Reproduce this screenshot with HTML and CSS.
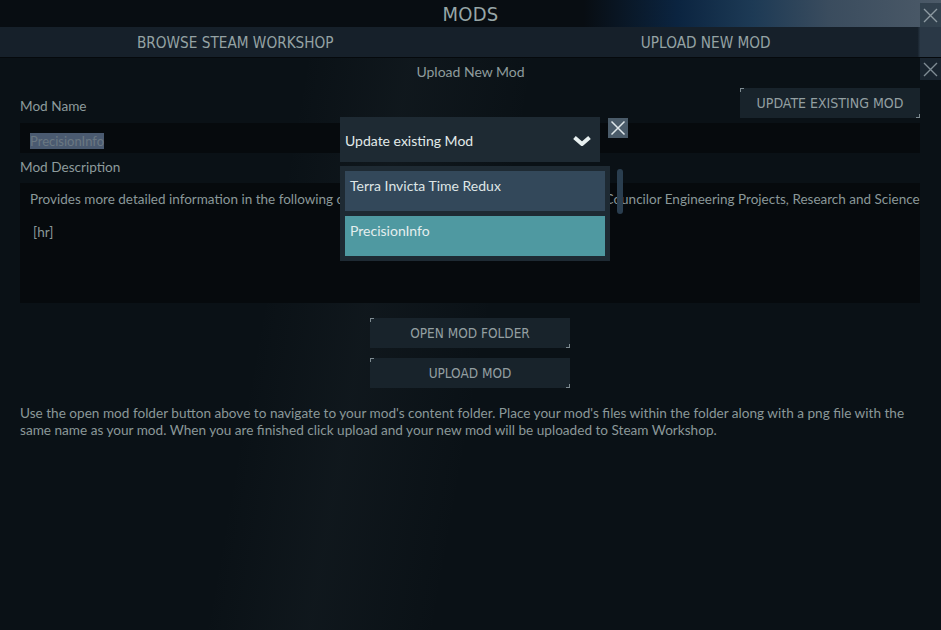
FILE: index.html
```html
<!DOCTYPE html>
<html lang="en">
  <head>
    <meta charset="UTF-8" />
    <title>Mods</title>
    <link rel="stylesheet" href="styles.css">
  </head>
  <body>
    <div class="screen">
      <header class="topbar">
        <span></span>
        <h1>MODS</h1>
        <button class="close-btn top-close" aria-label="Close">
          <svg width="15" height="15" viewBox="0 0 15 15"><path d="M1 1L14 14M14 1L1 14" stroke="#8d9aa2" stroke-width="1.4" fill="none"/></svg>
        </button>
      </header>

      <nav class="tabs">
        <div class="tab">BROWSE STEAM WORKSHOP</div>
        <div class="tab">UPLOAD NEW MOD</div>
      </nav>

      <main class="panel">
        <div class="panel-head">
          <span></span>
          <h2>Upload New Mod</h2>
          <button class="close-btn panel-close" aria-label="Close">
            <svg width="15" height="15" viewBox="0 0 15 15"><path d="M1 1L14 14M14 1L1 14" stroke="#7f8c94" stroke-width="1.4" fill="none"/></svg>
          </button>
        </div>

        <div class="form">
          <div class="name-row">
            <label class="field-label">Mod Name</label>
            <button class="game-btn update-btn">UPDATE EXISTING MOD</button>
          </div>
          <div class="input-box">
            <span class="selected">PrecisionInfo</span>
          </div>

          <label class="field-label desc-label">Mod Description</label>
          <div class="textarea-box">
            <div class="desc-line">Provides more detailed information in the following categories: Habitats, Space Combat, Nations, Councilor Engineering Projects, Research and Science</div>
            <div class="desc-line hr-line">[hr]</div>
          </div>

          <div class="actions">
            <button class="game-btn action-btn">OPEN MOD FOLDER</button>
            <button class="game-btn action-btn">UPLOAD MOD</button>
          </div>

          <p class="help">Use the open mod folder button above to navigate to your mod's content folder. Place your mod's files within the folder along with a png file with the same name as your mod. When you are finished click upload and your new mod will be uploaded to Steam Workshop.</p>

          <!-- dropdown popup over the form -->
          <div class="dropdown">
            <div class="dropdown-head">
              <span>Update existing Mod</span>
              <svg width="20" height="12" viewBox="0 0 20 12"><path d="M2.5 2.5L10 9L17.5 2.5" stroke="#e8f0f0" stroke-width="4" fill="none" stroke-linejoin="round"/></svg>
            </div>
            <div class="dropdown-list">
              <div class="option">Terra Invicta Time Redux</div>
              <div class="option active">PrecisionInfo</div>
              <div class="scroll-thumb"></div>
            </div>
          </div>
          <button class="clear-btn" aria-label="Cancel">
            <svg width="16" height="16" viewBox="0 0 16 16"><path d="M1.5 1.5L14.5 14.5M14.5 1.5L1.5 14.5" stroke="#dfe7ea" stroke-width="1.5" fill="none"/></svg>
          </button>
        </div>
      </main>
    </div>
  </body>
</html>
```

FILE: styles.css
```css
* {
  box-sizing: border-box;
  margin: 0;
  padding: 0;
}

body {
  width: 941px;
  height: 630px;
  overflow: hidden;
  background-color: #0a1116;
  font-family: Lato, "Noto Sans", sans-serif;
  color: #8d9c9d;
}

.screen {
  height: 630px;
  display: flex;
  flex-direction: column;
  background:
    linear-gradient(100deg, transparent 30%, rgba(120, 140, 150, 0.05) 40%, transparent 52%),
    #0a1116;
}

button {
  font-family: inherit;
  border: none;
  cursor: pointer;
}

/* top bar */
.topbar {
  height: 27px;
  display: grid;
  grid-template-columns: 1fr auto 1fr;
  align-items: center;
  background: linear-gradient(90deg, #080d12 0%, #080d12 62%, #0b2440 72%, #1d3a55 80%, #3a4c5e 88%, #4c5a68 100%);
}

.topbar h1 {
  font-family: "Liberation Sans Narrow", "DejaVu Sans Condensed", sans-serif;
  font-weight: normal;
  font-size: 20px;
  color: #97a6a7;
  letter-spacing: 0.3px;
  padding-top: 1px;
}

.close-btn {
  justify-self: end;
  width: 21px;
  display: flex;
  align-items: center;
  justify-content: center;
}

.top-close {
  height: 24px;
  margin-top: 3px;
  background-color: rgba(40, 55, 68, 0.7);
}

/* tabs */
.tabs {
  height: 30px;
  display: grid;
  grid-template-columns: 1fr 1fr;
  background: linear-gradient(90deg, #16202a 0%, #16202a 97.5%, #2a3846 97.8%);
}

.tab {
  display: flex;
  align-items: center;
  justify-content: center;
  font-family: "Liberation Sans Narrow", "DejaVu Sans Condensed", sans-serif;
  font-size: 15.2px;
  color: #95a3a4;
  padding-top: 1px;
}

/* panel */
.panel {
  flex: 1;
  border-top: 1px solid #05090c;
}

.panel-head {
  height: 22px;
  display: grid;
  grid-template-columns: 1fr auto 1fr;
  align-items: center;
}

.panel-head h2 {
  font-weight: normal;
  font-size: 14px;
  color: #8e9c9d;
  padding-top: 5px;
}

.panel-close {
  height: 22px;
  background-color: #1a2530;
}

.form {
  position: relative;
  padding: 0 21px 0 20px;
}

.name-row {
  height: 38px;
  padding-top: 8px;
  display: flex;
  justify-content: space-between;
  align-items: flex-end;
}

.field-label {
  display: block;
  font-size: 13.6px;
  line-height: 16px;
  color: #8d9b9c;
}

.name-row .field-label {
  padding-bottom: 4px;
}

.game-btn {
  position: relative;
  height: 30px;
  background-color: #18232b;
  font-family: "Liberation Sans Narrow", "DejaVu Sans Condensed", sans-serif;
  font-size: 14px;
  color: #939fa1;
}

.game-btn::before,
.game-btn::after {
  content: "";
  position: absolute;
  width: 3px;
  height: 3px;
}

.game-btn::before {
  left: 0;
  top: 0;
  border-left: 1px solid #7d8a90;
  border-top: 1px solid #7d8a90;
}

.game-btn::after {
  right: 0;
  bottom: 0;
  border-right: 1px solid #7d8a90;
  border-bottom: 1px solid #7d8a90;
}

.update-btn {
  width: 180px;
}

.input-box {
  margin-top: 5px;
  height: 30px;
  background-color: #060a0d;
  padding: 7px 10px;
}

.selected {
  display: inline-block;
  font-size: 13px;
  line-height: 16px;
  color: #6a7882;
  background-color: #4a5a70;
}

.desc-label {
  margin: 6px 0 8px;
}

.textarea-box {
  height: 120px;
  background-color: #060a0d;
  padding: 8px 10px;
  overflow: hidden;
}

.desc-line {
  font-size: 13.5px;
  line-height: 16px;
  color: #8a9899;
  white-space: nowrap;
}

.hr-line {
  margin-top: 17px;
  padding-left: 3px;
}

.actions {
  display: flex;
  flex-direction: column;
  align-items: center;
  gap: 10px;
  margin-top: 15px;
}

.action-btn {
  width: 200px;
  font-size: 13.5px;
}

.help {
  margin-top: 17px;
  font-size: 13.6px;
  line-height: 17px;
  color: #8a9899;
}

/* dropdown popup */
.dropdown {
  position: absolute;
  left: 340px;
  top: 37px;
  width: 270px;
}

.dropdown-head {
  width: 260px;
  height: 45px;
  background-color: #1e2a33;
  display: flex;
  align-items: center;
  justify-content: space-between;
  padding: 2px 8px 0 5px;
  font-size: 14px;
  color: #e2eaea;
}

.dropdown-list {
  position: relative;
  margin-top: 4px;
  background-color: #1e2a33;
  padding: 5px;
  display: flex;
  flex-direction: column;
  gap: 5px;
}

.option {
  height: 40px;
  padding: 7px 5px;
  font-size: 14px;
  line-height: 16px;
  color: #dfe6e6;
  background-color: #33485a;
}

.option.active {
  background-color: #4f99a1;
  color: #e4eeee;
}

.scroll-thumb {
  position: absolute;
  left: 277px;
  top: 3px;
  width: 6px;
  height: 45px;
  border-radius: 3px;
  background-color: #2a3e4f;
}

.clear-btn {
  position: absolute;
  left: 608px;
  top: 38px;
  width: 20px;
  height: 20px;
  background-color: #4a5b69;
  display: flex;
  align-items: center;
  justify-content: center;
}
```
